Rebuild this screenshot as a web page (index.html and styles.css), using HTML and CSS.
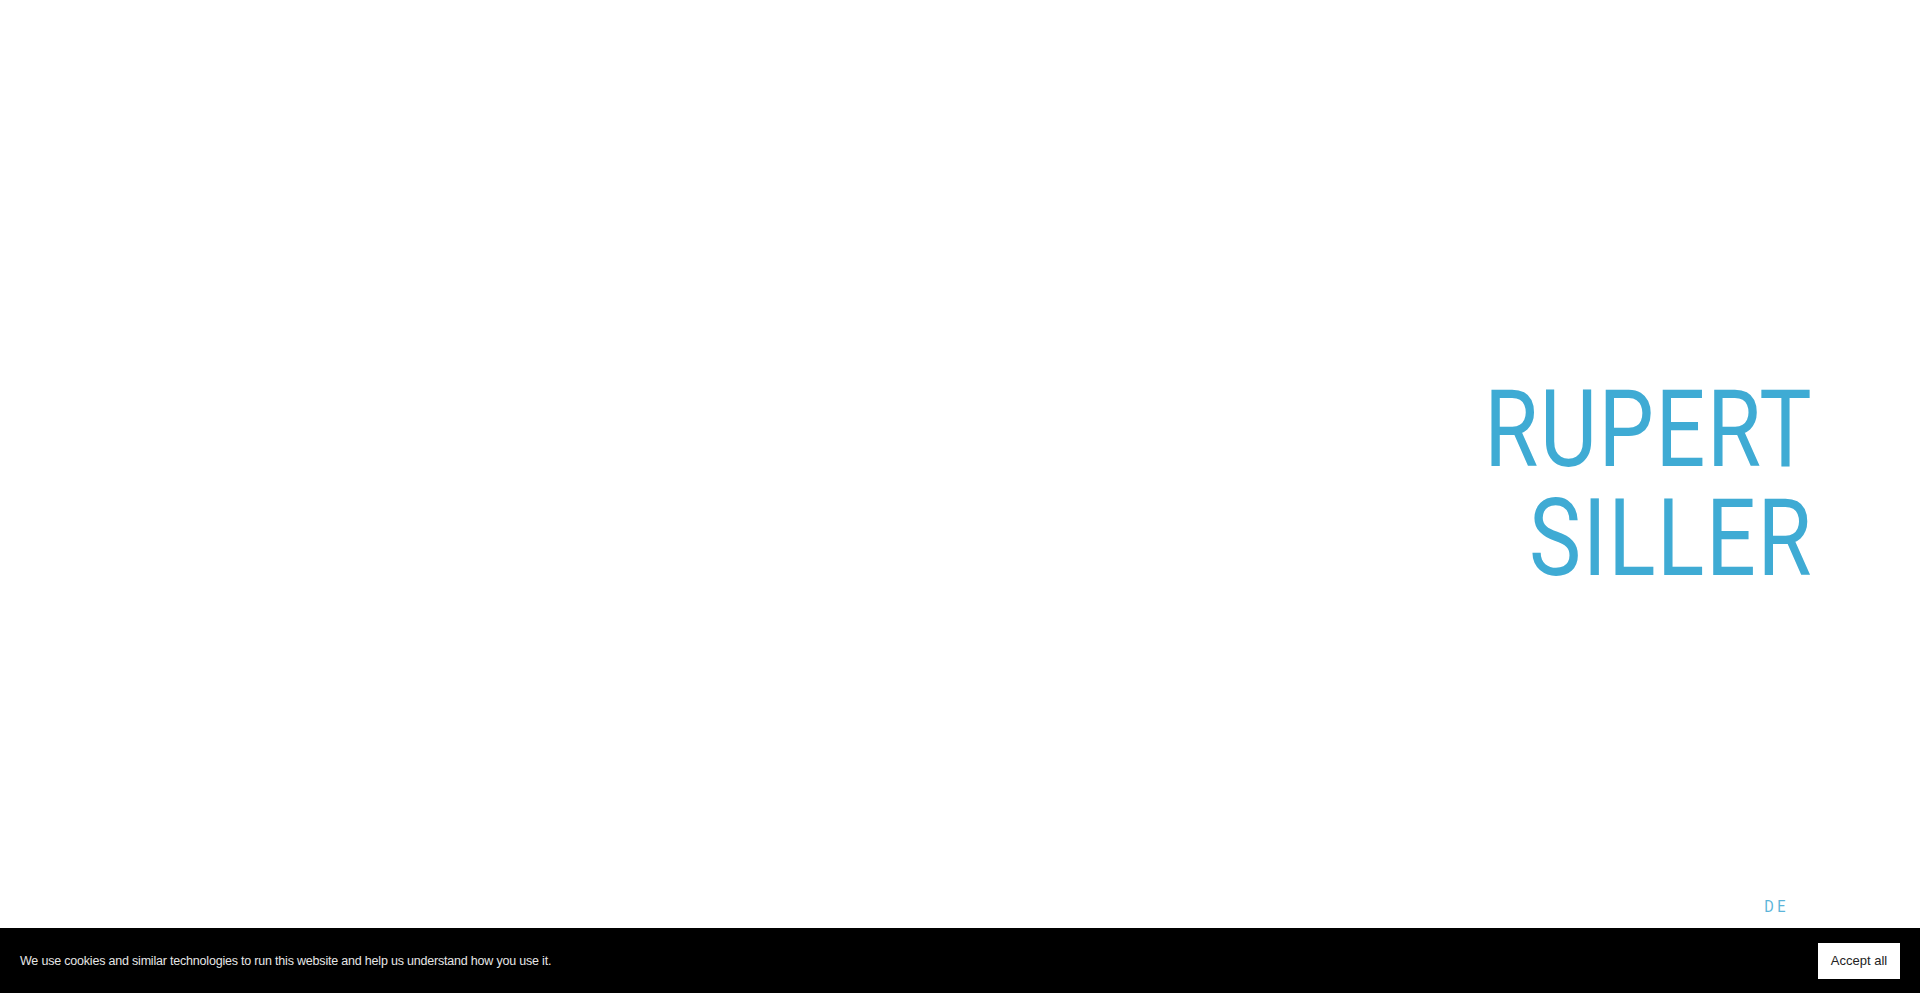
FILE: index.html
```html
<!DOCTYPE html>
<html lang="en">
<head>
<meta charset="utf-8">
<title>Rupert Siller</title>
<link rel="stylesheet" href="styles.css">
</head>
<body>
<div class="page">
  <main class="hero">
    <h1 class="title"><span class="line">RUPERT</span><span class="line">SILLER</span></h1>
    <nav class="lang"><a href="#" class="lang-link">DE</a></nav>
  </main>
</div>
<div class="cookie-bar">
  <p class="cookie-text">We use cookies and similar technologies to run this website and help us understand how you use it.</p>
  <button class="cookie-btn" type="button">Accept all</button>
</div>
</body>
</html>
```

FILE: styles.css
```css
html, body {
  margin: 0;
  padding: 0;
  background: #ffffff;
}

.page {
  height: 100vh;
  overflow: hidden;
}

.hero {
  height: 100%;
  box-sizing: border-box;
  display: flex;
  flex-direction: column;
  align-items: flex-end;
  padding: 375px 107px 0 0;
}

.title {
  margin: 0;
  display: flex;
  flex-direction: column;
  align-items: flex-end;
  font-family: Roboto, "Liberation Sans", sans-serif;
  font-weight: 400;
  font-size: 107px;
  line-height: 109px;
  color: #3fabd4;
  letter-spacing: 2px;
  transform: scaleX(0.82);
  transform-origin: right top;
}

.line {
  display: block;
}

.lang {
  margin-top: 303px;
  margin-right: 24px;
}

.lang-link {
  font-family: Roboto, "Liberation Sans", sans-serif;
  font-size: 17px;
  line-height: 20px;
  letter-spacing: 4px;
  color: #5bb4d9;
  text-decoration: none;
  display: inline-block;
  transform: scaleX(0.85);
  transform-origin: right top;
}

.cookie-bar {
  position: fixed;
  left: 0;
  right: 0;
  bottom: 0;
  height: 65px;
  background: #000000;
  display: flex;
  align-items: center;
  justify-content: space-between;
  padding: 0 20px;
  box-sizing: border-box;
}

.cookie-text {
  margin: 0;
  font-family: "Liberation Sans", Arial, sans-serif;
  font-size: 12.5px;
  line-height: 16px;
  letter-spacing: -0.2px;
  color: #e6e6e6;
}

.cookie-btn {
  font-family: "Liberation Sans", Arial, sans-serif;
  font-size: 13px;
  line-height: 16px;
  color: #222222;
  background: #ffffff;
  border: none;
  border-radius: 0;
  width: 82px;
  height: 36px;
  padding: 0;
  margin-top: 1px;
}
```
